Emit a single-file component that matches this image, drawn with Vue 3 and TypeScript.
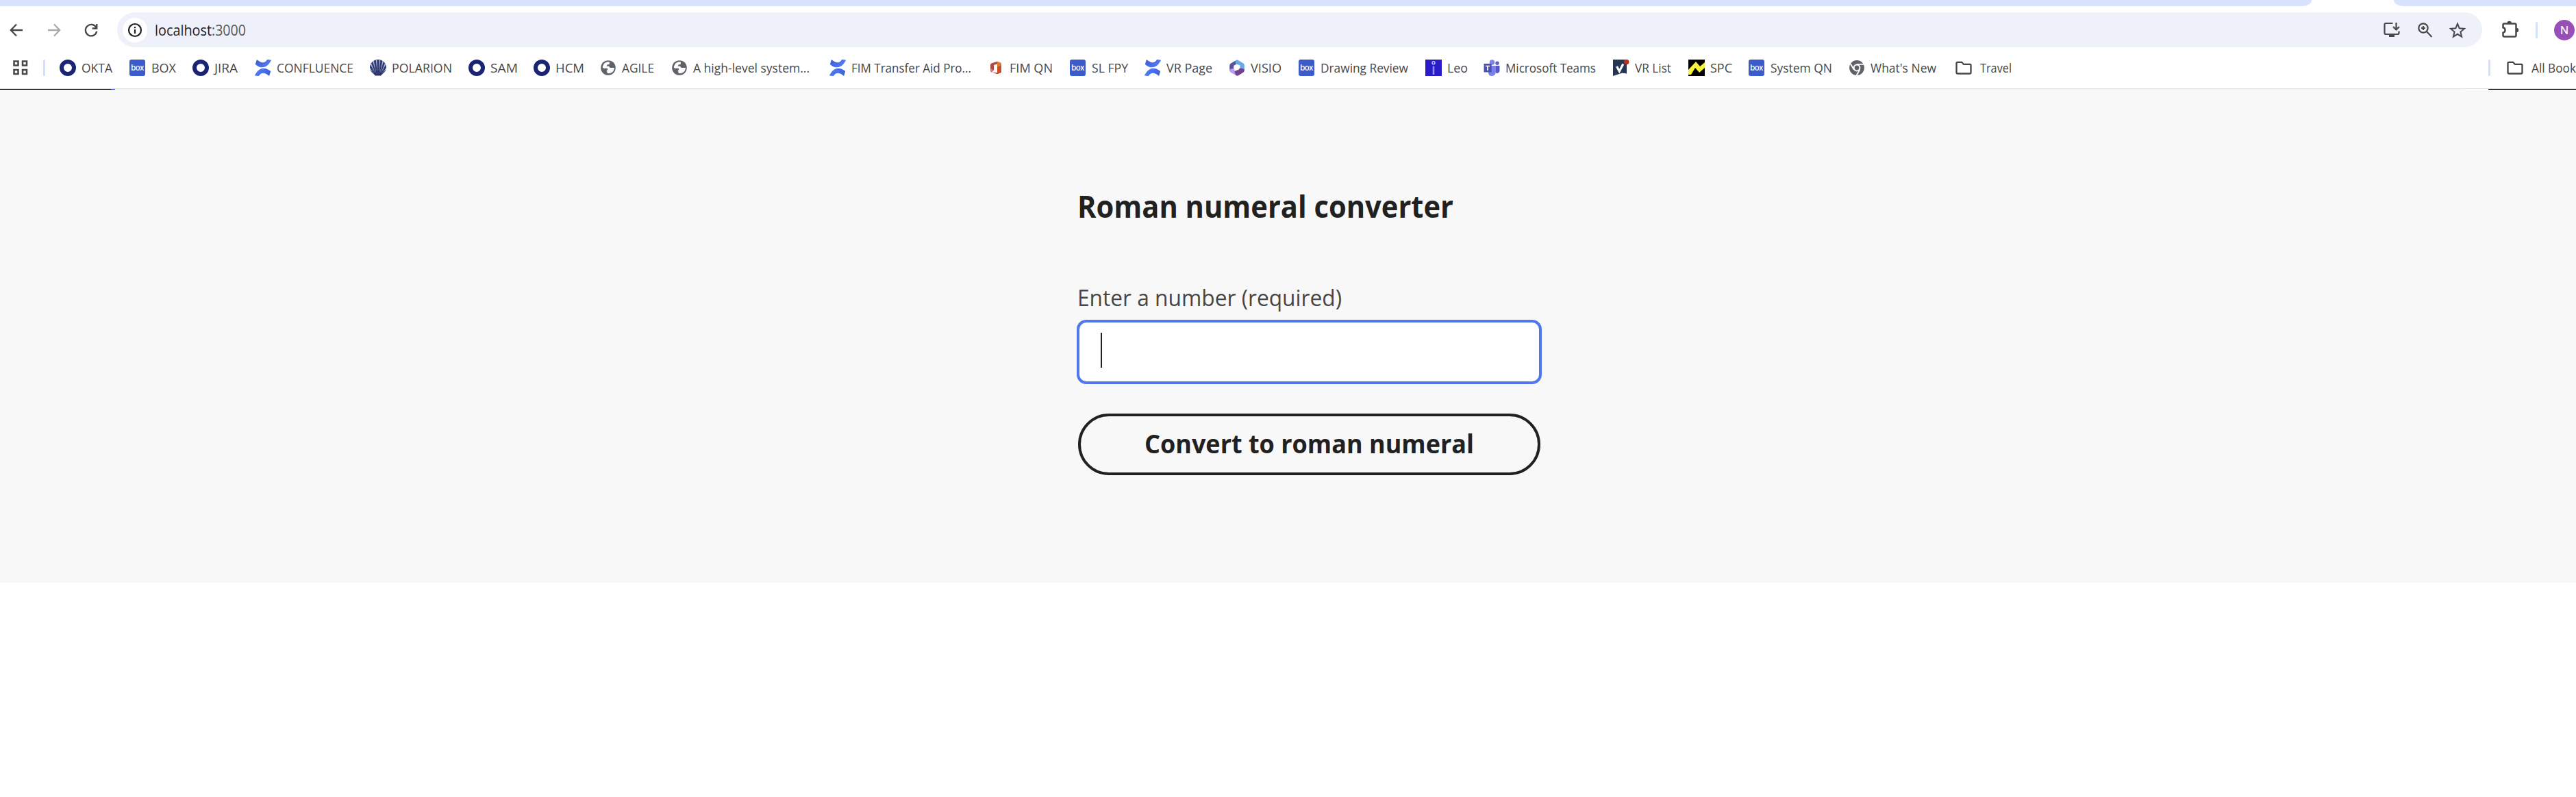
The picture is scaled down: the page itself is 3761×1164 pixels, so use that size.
<script setup lang="ts">
import type { Directive } from 'vue'

interface Bookmark {
  label: string
  icon: string
  pitch: number
  text: number
}

const bookmarks: Bookmark[] = [
  { label: 'OKTA', icon: 'ring', pitch: 102, text: 45 },
  { label: 'BOX', icon: 'box', pitch: 92, text: 36 },
  { label: 'JIRA', icon: 'ring', pitch: 91, text: 34 },
  { label: 'CONFLUENCE', icon: 'confluence', pitch: 168, text: 112 },
  { label: 'POLARION', icon: 'shell', pitch: 144, text: 88 },
  { label: 'SAM', icon: 'ring', pitch: 95, text: 40 },
  { label: 'HCM', icon: 'ring', pitch: 97, text: 42 },
  { label: 'AGILE', icon: 'globe', pitch: 104, text: 47 },
  { label: 'A high-level system...', icon: 'globe', pitch: 231, text: 170 },
  { label: 'FIM Transfer Aid Pro...', icon: 'confluence', pitch: 231, text: 175 },
  { label: 'FIM QN', icon: 'office', pitch: 120, text: 63 },
  { label: 'SL FPY', icon: 'box', pitch: 109, text: 53 },
  { label: 'VR Page', icon: 'confluence', pitch: 123, text: 67 },
  { label: 'VISIO', icon: 'm365', pitch: 102, text: 45 },
  { label: 'Drawing Review', icon: 'box', pitch: 185, text: 128 },
  { label: 'Leo', icon: 'leo', pitch: 85, text: 30 },
  { label: 'Microsoft Teams', icon: 'teams', pitch: 189, text: 132 },
  { label: 'VR List', icon: 'check', pitch: 110, text: 53 },
  { label: 'SPC', icon: 'zigzag', pitch: 88, text: 32 },
  { label: 'System QN', icon: 'box', pitch: 146, text: 90 },
  { label: "What's New", icon: 'chrome', pitch: 156, text: 96 },
]

// Condenses a label horizontally so that it spans the given width.
const vFit: Directive<HTMLElement, number> = {
  mounted(el, binding) {
    const natural = el.getBoundingClientRect().width
    el.style.width = `${binding.value}px`
    el.style.transform = `scaleX(${binding.value / natural})`
  },
}
</script>

<template>
  <div class="window">
    <div class="tabstrip">
      <i class="strip left"></i>
      <i class="strip right"></i>
    </div>

    <div class="toolbar">
      <svg class="nav back" viewBox="0 0 24 24"><path d="M21 12H4M12 3.500 3.800 12l8.200 8.500" /></svg>
      <svg class="nav forward" viewBox="0 0 24 24"><path d="M3 12h17M12 3.500 20.200 12 12 20.500" /></svg>
      <svg class="nav reload" viewBox="0 0 24 24"><path d="M19.500 8.200A8.300 8.300 0 1 0 20.300 13.800M20.300 3v6.500h-6.600" /></svg>
      <div class="omnibox">
        <span class="info">
          <svg viewBox="0 0 24 24"><circle cx="12" cy="12" r="9" /><path d="M12 11v6M12 7v2.200" /></svg>
        </span>
        <span class="url"><span v-fit="83" class="fit">localhost</span><span v-fit="50" class="fit port">:3000</span></span>
        <span class="actions">
          <svg viewBox="0 0 24 24" class="install"><path d="M13.500 2H3.500Q1.500 2 1.500 4v12q0 2 2 2h17q2 0 2-2v-2.500M18.500 1v10M14 7l4.500 4.500L23 7" /><path class="solid" d="M8 18h8v4H8z" /></svg>
          <svg viewBox="0 0 24 24"><circle cx="10" cy="9" r="6.700" /><path d="m14.800 14 7.700 8M10 6v6M7 9h6" /></svg>
          <svg viewBox="0 0 24 24"><path class="star" d="m12 2.600 2.700 6.700 7.200.600-5.500 4.700 1.700 7-6.100-3.800-6.100 3.800 1.700-7-5.500-4.700 7.200-.6z" /></svg>
        </span>
      </div>
      <svg class="puzzle" viewBox="0 0 26 26">
        <path d="M4.500 4.500h15q2 0 2 2v15q0 2-2 2h-15q-2 0-2-2v-3.800q3-.5 3-3.700t-3-3.700V6.500q0-2 2-2z" />
        <path class="solid" d="M8.500 4a3.200 3.200 0 0 1 6.400 0zM22 10.700a3.200 3.200 0 0 1 0 6.400z" />
      </svg>
      <i class="divider"></i>
      <span class="avatar">N</span>
    </div>

    <div class="bookmarks">
      <svg class="apps" viewBox="0 0 22 22"><path d="M1.500 1.500h6v6h-6zM14 1.500h6v6h-6zM1.500 14h6v6h-6zM14 14h6v6h-6z" /></svg>
      <i class="divider"></i>
      <div v-for="(b, i) in bookmarks" :key="i" class="bookmark" :style="{ width: b.pitch + 'px' }">
        <svg v-if="b.icon === 'ring'" viewBox="0 0 24 24"><circle cx="12" cy="12" r="9" fill="none" stroke="#1a2474" stroke-width="6" /></svg>
        <span v-else-if="b.icon === 'box'" class="boxicon"><span>box</span></span>
        <svg v-else-if="b.icon === 'confluence'" viewBox="0 0 24 24">
          <defs>
            <linearGradient :id="'c' + i" x1="0" y1="0" x2="1" y2="0.500"><stop offset="0" stop-color="#395bd0" /><stop offset="1" stop-color="#527df8" /></linearGradient>
            <linearGradient :id="'d' + i" x1="1" y1="1" x2="0" y2="0.500"><stop offset="0" stop-color="#395bd0" /><stop offset="1" stop-color="#527df8" /></linearGradient>
          </defs>
          <path :fill="`url(#c${i})`" d="M3.600.6Q3 0 2.600.9L1 6.200q-.2.800.5 1.200 4.500 3.900 9.500 3.900 5.400 0 9.500-4.800l3.200-4.800q.4-1-.4-1.200L18.800.100q-.8-.2-1.200.6-2.100 3.300-5.700 3.500-3.500.2-8.300-3.600z" />
          <path :fill="`url(#d${i})`" d="M20.400 23.400q.6.600 1-.3l1.600-5.300q.2-.8-.5-1.200-4.500-3.900-9.500-3.900-5.400 0-9.500 4.800L.3 22.300q-.4 1 .4 1.200l4.500.4q.8.200 1.200-.6 2.100-3.300 5.700-3.500 3.500-.2 8.300 3.600z" />
        </svg>
        <svg v-else-if="b.icon === 'shell'" viewBox="0 0 24 24">
          <path fill="#30366a" d="M12 0a12 12 0 0 1 12 11.500Q23.500 17 19 20.500L16 23.500H8L5 20.500Q.5 17 0 11.500A12 12 0 0 1 12 0z" />
          <path fill="#9dbbe2" d="m11 20-2.300-19 1.800-.5zM13 20 13.600.500l1.800.5zM9.300 20 4.300 3.300l1.600-1.100zM14.700 20 18.200 2.200l1.600 1.100zM7.800 20 1 7.500l1.300-1.900zM16.200 20 21.800 5.600l1.200 1.900zM6.500 20 0 13.800v-2zM17.500 20 24 11.800v2z" />
        </svg>
        <svg v-else-if="b.icon === 'globe'" viewBox="0 0 24 24">
          <circle cx="12" cy="12" r="10.800" fill="#5f6368" />
          <path fill="#fff" d="M13.800 3.400Q9 2.500 5.800 6L3.700 10.500q0 2.300 2 2.300h4.800l1.200 2.500h-2l.8 4.300q3.300 1.500 6.500-.5 3.600-2.200 4-7.200h-6.300l-1.700-2.200H9.400l1.500-2.500 2.800-.3z" />
        </svg>
        <svg v-else-if="b.icon === 'office'" viewBox="0 0 24 24">
          <path fill="#b04a3c" d="M14 2.800v3.700L9 8v7.500L5.500 18.500Q4 17.500 4 16V8q0-2 2-2.800z" />
          <path fill="#c87a9a" d="m9 15.500-3.500 3Q4 17.500 4 16v-3z" />
          <path fill="#b8452d" d="M6 18.500 14 19.300V21.200z" />
          <path fill="#dc7a30" d="m14 2.800 5 1.700q.8.300.8 1.200V18q0 1-.8 1.300l-5 1.900z" /><path fill="#c54f28" d="m14 11 5.800-3v10q0 1-.8 1.300l-5 1.900z" />
        </svg>
        <svg v-else-if="b.icon === 'm365'" viewBox="0 0 24 24">
          <path fill="#58539b" d="M12 .5 3 5.500Q1.200 6.500 1.200 9v7l6-2V9L14 5z" />
          <path fill="#67a9e5" d="m10 1.500 3-1 8 4.700q1.800 1 1.800 3v6.500L16.500 12V8.500L10 6z" />
          <path fill="#b79cf0" d="M1.200 14v2q0 1.800 1.600 2.800l7.200 4q2 1.200 4-.2l-5-6-1.800-3.500z" />
          <path fill="#71408e" d="M22.800 14v2q0 1.800-1.600 2.800L14 23.300q-2.500 1-4-1l-1.500-5 8.500-5z" />
          <circle cx="12" cy="11.800" r="3.600" fill="#fff" />
        </svg>
        <svg v-else-if="b.icon === 'leo'" viewBox="0 0 24 24">
          <path fill="#2a1bc9" d="M0 0h24v24H0z" /><circle cx="12" cy="4.800" r="2" fill="none" stroke="#b9c4fb" stroke-width="1.400" /><path stroke="#8e8eea" stroke-width="2.600" d="M12 9.500V22" />
        </svg>
        <svg v-else-if="b.icon === 'teams'" viewBox="0 0 24 24">
          <circle cx="12.500" cy="4" r="3.800" fill="#7f85e8" /><circle cx="20" cy="5.200" r="2.700" fill="#5b60c8" />
          <path fill="#5458bf" d="M15 9h8.500v6.500q0 4.500-5 4.500z" /><path fill="#7b83eb" d="M7 9h11v8q0 7-6 7-5 0-5-5z" />
          <path fill="#4b50b7" d="M.5 6h11.200v12.500H.5z" />
          <path fill="none" stroke="#fff" stroke-width="1.700" d="M3 9.500h6M6 9.500V16" />
        </svg>
        <svg v-else-if="b.icon === 'check'" viewBox="0 0 24 24">
          <path fill="#263650" d="M0 0h20v20.500l-6.500-1L0 24z" /><path fill="none" stroke="#fff" stroke-width="3.200" d="m5.500 10 3.800 7 5.500-10.500" /><circle cx="19.700" cy="3.600" r="3.800" fill="#bc2f28" />
        </svg>
        <svg v-else-if="b.icon === 'zigzag'" viewBox="0 0 24 24">
          <path d="M0 0h24v24H0z" /><path fill="#f5f33c" d="M0 15 11 3l6 7 7-6v8l-8 7-6-7-6 10H0z" />
        </svg>
        <svg v-else viewBox="0 0 24 24">
          <circle cx="12" cy="12" r="10.900" fill="#5f6368" />
          <circle cx="12" cy="12" r="4.400" fill="#5f6368" stroke="#fff" stroke-width="2" />
          <path fill="none" stroke="#fff" stroke-width="1.900" d="M12 6.900h10M7.600 14.600 2.700 6M16.400 14.600 11.600 23" />
        </svg>
        <span class="label fit" v-fit="b.text">{{ b.label }}</span>
      </div>
      <div class="bookmark">
        <svg class="folder" viewBox="0 0 24 24"><path d="M3 3.800h6l3 3h9q1.500 0 1.500 1.500V19q0 1.500-1.500 1.500H3Q1.500 20.500 1.500 19V5.300q0-1.500 1.500-1.500z" /></svg>
        <span class="label fit spaced" v-fit="46">Travel</span>
      </div>
      <i class="divider all"></i>
      <div class="bookmark">
        <svg class="folder" viewBox="0 0 24 24"><path d="M3 3.800h6l3 3h9q1.500 0 1.500 1.500V19q0 1.500-1.500 1.500H3Q1.500 20.500 1.500 19V5.300q0-1.500 1.500-1.500z" /></svg>
        <span class="label fit spaced" v-fit="65">All Book</span>
      </div>
    </div>

    <main class="page">
      <div class="edge"><i class="black"></i><i class="blue"></i><i class="white"></i><i class="black end"></i></div>
      <form class="form" @submit.prevent>
        <h1><span v-fit="549" class="fit">Roman numeral converter</span></h1>
        <label><span v-fit="386" class="fit">Enter a number (required)</span></label>
        <div class="field"><i class="caret"></i></div>
        <button type="submit"><span v-fit="481" class="fit">Convert to roman numeral</span></button>
      </form>
    </main>
  </div>
</template>

<style>
html,
body {
  margin: 0;
  background: #fff;
  overflow: hidden;
}
</style>

<style scoped>
.window {
  width: 3761px;
  height: 1164px;
  overflow: hidden;
  background: #fff;
  font-family: 'Open Sans', 'Noto Sans', sans-serif;
  color: #474747;
}
svg {
  display: block;
  flex: none;
}
i {
  display: block;
  flex: none;
}
.fit {
  display: inline-block;
  flex: none;
  transform-origin: 0 50%;
  white-space: nowrap;
}
.tabstrip {
  display: flex;
  justify-content: space-between;
  height: 9px;
}
.strip {
  background: #d8e2fb;
}
.strip.left {
  width: 3375px;
  border-bottom-right-radius: 16px 11px;
}
.strip.right {
  width: 266px;
  border-bottom-left-radius: 16px 11px;
}
.toolbar {
  display: flex;
  align-items: center;
  height: 51px;
  padding-top: 9px;
  padding-left: 12px;
}
.nav {
  width: 24px;
  height: 24px;
  margin-right: 31px;
  margin-top: 1px;
  fill: none;
  stroke: #474747;
  stroke-width: 2.300;
}
.forward {
  stroke: #aaa;
}
.reload {
  margin-right: 27px;
  margin-left: -1px;
}
.omnibox {
  display: flex;
  flex: none;
  align-items: center;
  box-sizing: border-box;
  width: 3453px;
  height: 51px;
  margin-left: -1px;
  padding: 0 24px 0 8px;
  border-radius: 26px;
  background: #eef1fa;
}
.info {
  display: flex;
  align-items: center;
  justify-content: center;
  width: 36px;
  height: 36px;
  border-radius: 50%;
  background: #fff;
}
.info svg {
  width: 24px;
  height: 24px;
  fill: none;
  stroke: #1f1f1f;
  stroke-width: 2.200;
}
.url {
  display: flex;
  margin-left: 11px;
  font-size: 21px;
  line-height: 30px;
  color: #1f1f1f;
  white-space: nowrap;
}
.port {
  color: #555;
}
.actions {
  display: flex;
  gap: 24px;
  margin-left: auto;
}
.actions svg {
  width: 24px;
  height: 24px;
  fill: none;
  stroke: #474747;
  stroke-width: 2.200;
}
.actions .star {
  stroke-width: 2;
}
.actions .solid,
.puzzle .solid {
  fill: #474747;
  stroke: none;
}
.puzzle {
  width: 26px;
  height: 26px;
  margin-left: 28px;
  margin-top: -2px;
  fill: none;
  stroke: #474747;
  stroke-width: 2.500;
}
.divider {
  width: 3px;
  height: 24px;
  border-radius: 2px;
  background: #d3dffb;
}
.toolbar .divider {
  margin-left: 24px;
  margin-right: 24px;
}
.avatar {
  flex: none;
  width: 30px;
  height: 30px;
  border-radius: 50%;
  background: #994fb8;
  color: #fff;
  font: 17px/30px Roboto, sans-serif;
  text-align: center;
}
.bookmarks {
  display: flex;
  align-items: center;
  height: 61px;
  box-sizing: border-box;
  padding: 0 0 0 19px;
  border-bottom: 1px solid #dedede;
}
.apps {
  width: 22px;
  height: 22px;
  margin-right: 22px;
  fill: none;
  stroke: #474747;
  stroke-width: 2.500;
}
.apps + .divider {
  margin-right: 21px;
}
.bookmark {
  display: flex;
  align-items: center;
  flex: none;
  white-space: nowrap;
}
.bookmark svg {
  width: 24px;
  height: 24px;
}
.boxicon {
  display: flex;
  flex: none;
  align-items: center;
  justify-content: center;
  width: 23px;
  height: 24px;
  margin-right: 1px;
  border-radius: 3px;
  background: #3b5bcd;
  color: #fff;
  font: 500 11.500px/22px Inter, sans-serif;
  letter-spacing: -0.500px;
}
.label {
  margin-left: 8px;
  font-size: 18.500px;
  line-height: 24px;
}
.label.spaced {
  margin-left: 12px;
}
.folder {
  fill: none;
  stroke: #474747;
  stroke-width: 2.300;
}
.divider.all {
  margin-left: auto;
  margin-right: 24px;
}
.bookmarks > .bookmark:last-child {
  width: 101px;
}
.page {
  height: 721px;
  background: #f8f8f8;
}
.edge {
  display: flex;
  height: 1px;
}
.edge .black {
  width: 162px;
  background: #000;
}
.edge .blue {
  width: 6px;
  background: #3b53d4;
}
.edge .white {
  width: 36px;
  margin-left: auto;
  background: #fff;
}
.edge .end {
  width: 128px;
}
.form {
  display: flex;
  flex-direction: column;
  width: 679px;
  margin-left: 1572px;
  padding-top: 140px;
  white-space: nowrap;
}
h1 {
  margin: 0 0 0 1px;
  color: #212121;
  font-size: 45px;
  font-weight: 700;
  line-height: 60px;
}
label {
  margin: 79px 0 0 1px;
  font-size: 33.500px;
  line-height: 48px;
  color: #474747;
}
.field {
  box-sizing: border-box;
  height: 94px;
  margin-top: 9px;
  padding: 15px 0 0 31px;
  border: 4px solid #4f77ee;
  border-radius: 14px;
  background: #fff;
}
.caret {
  width: 2px;
  height: 51px;
  background: #212121;
}
button {
  box-sizing: border-box;
  width: 675px;
  height: 90px;
  margin: 43px 0 0 2px;
  padding: 0 0 2px;
  border: 4px solid #212121;
  border-radius: 45px;
  background: transparent;
  color: #212121;
  font: 700 37px/50px 'Open Sans', 'Noto Sans', sans-serif;
  text-align: center;
}
button .fit {
  text-align: left;
}
</style>
